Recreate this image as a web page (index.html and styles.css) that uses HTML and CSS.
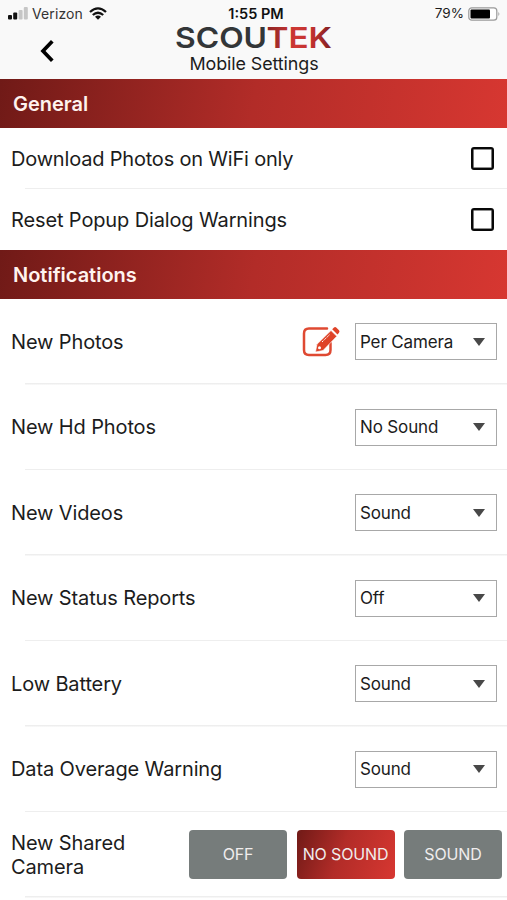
FILE: index.html
```
<!DOCTYPE html>
<html lang="en">
<head>
<meta charset="utf-8">
<title>Mobile Settings</title>
<link rel="stylesheet" href="styles.css">
</head>
<body>
<header class="top">
  <div class="status">
    <div class="carrier">
      <svg class="signal" width="20" height="13" viewBox="0 0 20 13"><g fill="#111"><rect x="0" y="8" width="4" height="4.5" rx="1"/><rect x="5.2" y="5.5" width="4" height="7" rx="1"/></g><g fill="#c6c6c6"><rect x="10.6" y="3" width="4" height="9.500" rx="1"/><rect x="15.800" y="0" width="4" height="12.500" rx="1"/></g></svg>
      <span class="carrier-name">Verizon</span>
      <svg class="wifi" width="18" height="13" viewBox="0 0 18 13"><g fill="none" stroke="#111" stroke-width="2.300"><path d="M1 5Q9-2.200 17 5"/><path d="M3.800 8Q9 3.400 14.200 8"/></g><path d="M6 9.800Q9 7.400 12 9.800L9 12.800Z" fill="#111"/></svg>
    </div>
    <span class="time">1:55 PM</span>
    <div class="power">
      <span>79%</span>
      <svg width="33" height="14" viewBox="0 0 33 14"><rect x=".8" y=".8" width="28" height="12.400" rx="3" fill="#fff" stroke="#999" stroke-width="1.200"/><rect x="2.500" y="2.500" width="19.500" height="9" rx="1" fill="#000"/><path d="M30.500 4.800Q32.200 7 30.500 9.200Z" fill="#888"/></svg>
    </div>
  </div>
  <div class="nav">
    <svg class="back" width="16" height="24" viewBox="0 0 16 24"><path d="M13.300 2.300L4 12L13.300 21.700" fill="none" stroke="#000" stroke-width="3.700"/></svg>
    <div class="brand">
      <svg class="logo" width="158" height="36" viewBox="0 -6 158 36">
        <defs><linearGradient id="red" x1="0" x2="1"><stop offset="0" stop-color="#8d2424"/><stop offset=".45" stop-color="#cf3834"/><stop offset=".72" stop-color="#bd302e"/><stop offset="1" stop-color="#7e2023"/></linearGradient></defs>
        <text class="logo-text" x="0" y="22.500" textLength="92" lengthAdjust="spacingAndGlyphs" fill="#333638">SCOU</text>
        <text class="logo-text" x="91.500" y="22.500" textLength="65.500" lengthAdjust="spacingAndGlyphs" fill="url(#red)">TEK</text>
      </svg>
      <h1 class="title">Mobile Settings</h1>
    </div>
  </div>
</header>
<main>
  <h2 class="bar">General</h2>
  <div class="row check-row"><span class="label tight">Download Photos on WiFi only</span><span class="box"></span></div>
  <div class="row check-row last"><span class="label">Reset Popup Dialog Warnings</span><span class="box"></span></div>
  <h2 class="bar">Notifications</h2>
  <div class="row"><span class="label">New Photos</span>
    <svg class="edit" width="38" height="32" viewBox="0 0 38 32"><path d="M25 2.500H7Q2 2.500 2 7.500V24Q2 29 7 29H23.500Q28.500 29 28.500 24V17" fill="none" stroke="#df4932" stroke-width="2.500" stroke-linecap="round"/><path d="M13.500 26L15 18.200L29 4.500L34.800 10.300L21 24.500Z" fill="#df4328" stroke="#fff" stroke-width=".6"/><path d="M30.200 3.300L32 1.500Q33.200.5 34.500 1.800L37 4.300Q38 5.500 37 6.700L35.500 8.500Z" fill="#df4328"/><path d="M20 16L28 8.300" stroke="#fff" stroke-width="1" stroke-dasharray="1.500 .7"/><circle cx="17.500" cy="21.800" r="1.500" fill="#fff"/></svg>
    <div class="select"><span>Per Camera</span><i class="arrow"></i></div></div>
  <div class="row"><span class="label">New Hd Photos</span><div class="select"><span>No Sound</span><i class="arrow"></i></div></div>
  <div class="row"><span class="label">New Videos</span><div class="select"><span>Sound</span><i class="arrow"></i></div></div>
  <div class="row"><span class="label">New Status Reports</span><div class="select"><span>Off</span><i class="arrow"></i></div></div>
  <div class="row"><span class="label">Low Battery</span><div class="select"><span>Sound</span><i class="arrow"></i></div></div>
  <div class="row"><span class="label">Data Overage Warning</span><div class="select"><span>Sound</span><i class="arrow"></i></div></div>
  <div class="row shared"><span class="label">New Shared<br>Camera</span>
    <div class="buttons"><span class="btn">OFF</span><span class="btn active">NO SOUND</span><span class="btn">SOUND</span></div></div>
</main>
</body>
</html>
```
FILE: styles.css
```
* { box-sizing: border-box; }
body { margin: 0; height: 900px; overflow: hidden; background: #fff; color: #1c1c1c; font-family: Inter, "Liberation Sans", sans-serif; }
svg { display: block; flex: none; }
.top { height: 79px; background: #f9f9f9; }
.status { display: grid; grid-template-columns: 1fr auto 1fr; align-items: center; height: 27px; padding: 0 6px 0 8px; font-size: 13.500px; line-height: 27px; }
.carrier { display: flex; align-items: center; gap: 4px; color: #333; }
.carrier-name { font-size: 14px; letter-spacing: .1px; }
.wifi { margin-left: 2px; }
.time { font-weight: 600; font-size: 14.500px; color: #111; padding-left: 3px; }
.power { display: flex; justify-content: flex-end; align-items: center; gap: 4px; }
.nav { display: grid; grid-template-columns: 175px 158px 1fr; height: 52px; }
.back { margin: 12px 0 0 39px; }
.logo { margin-top: -8px; }
.logo-text { font-family: Inter, sans-serif; font-weight: 600; font-size: 29px; }
.title { margin: -3px 0 0; font-size: 17.900px; font-weight: 400; line-height: 24px; text-align: center; white-space: nowrap; letter-spacing: -.1px; }
.bar { margin: 0; height: 49px; padding-left: 13px; line-height: 50px; font-size: 20px; font-weight: 600; color: #fff3ef; background: linear-gradient(100deg, #701a17 0%, #b22c28 50%, #d73731 100%); }
.row { display: flex; align-items: center; height: 85.500px; padding: 0 10px 0 11px; background: linear-gradient(#eee, #eee) 25px 100% / 100% 1.500px no-repeat; }
.check-row { height: 61px; padding-right: 13px; }
.check-row.last { background: none; }
.label { flex: 1; font-size: 20px; line-height: 24px; white-space: nowrap; letter-spacing: -.13px; }
.label.tight { letter-spacing: -.19px; }
.box { width: 23px; height: 23px; border: 2px solid #080808; border-radius: 3px; box-shadow: inset 0 0 0 .6px #222; }
.edit { margin-right: 15px; }
.select { display: flex; align-items: center; justify-content: space-between; width: 142px; height: 37px; padding: 0 11px 0 4px; border: 1.500px solid #a8a8a8; font-size: 17px; letter-spacing: -.15px; background: #fff; }
.arrow { border: 6.500px solid transparent; border-top: 8px solid #484848; border-bottom: 0; }
.shared { padding-right: 5px; }
.buttons { display: flex; gap: 9.500px; }
.btn { width: 98px; height: 49px; border-radius: 4px; background: #767c7b; color: #f0eded; font-size: 16px; line-height: 49px; text-align: center; white-space: nowrap; letter-spacing: -.15px; }
.btn.active { background: linear-gradient(110deg, #701a17 0%, #b22c28 45%, #d73731 100%); }
```
